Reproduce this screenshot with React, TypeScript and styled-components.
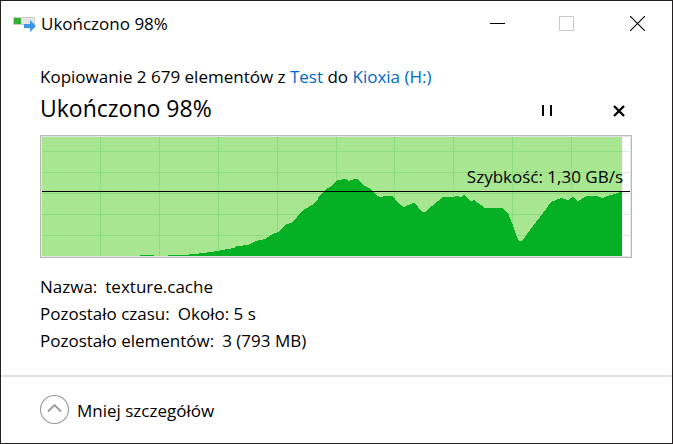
import React from "react";
import styled, { createGlobalStyle } from "styled-components";

const GlobalStyle = createGlobalStyle`
  *, *::before, *::after { box-sizing: border-box; }
  body { margin: 0; background: #fff; }
  button { font: inherit; color: inherit; border: 0; background: none; padding: 0; }
`;

const Window = styled.main`
  display: flex;
  flex-direction: column;
  min-height: 100vh;
  border: 1px solid #231f20;
  background: #fff;
  color: #000;
  font-family: "Open Sans", "Noto Sans", sans-serif;
  font-size: 17px;
  line-height: 27px;
`;

const TitleBar = styled.header`
  display: flex;
  align-items: center;
  height: 44px;
  padding-left: 12px;
`;

const Title = styled.h1`
  flex: 1;
  margin: 0 0 0 5px;
  font-size: 17px;
  font-weight: 400;
  white-space: nowrap;
`;

const CaptionButton = styled.button<{ $muted?: boolean }>`
  display: grid;
  place-items: center;
  width: 70px;
  height: 44px;
  color: ${(p) => (p.$muted ? "#c8c8c8" : "#000")};
`;

const Body = styled.section`
  flex: 1;
  padding: 18px 40px 0 39px;
`;

const Summary = styled.p`
  margin: 0;
  white-space: nowrap;
`;

const Location = styled.a`
  color: #0066cc;
  text-decoration: none;
`;

const StatusRow = styled.div`
  display: flex;
  align-items: flex-end;
  height: 37px;
`;

const Status = styled.h2`
  flex: 1;
  align-self: flex-start;
  margin: 0;
  font-size: 23px;
  line-height: 36px;
  font-weight: 400;
`;

const ActionButton = styled.button`
  display: grid;
  place-items: center;
  width: 26px;
  height: 32px;
  margin-left: 46px;
`;

const Chart = styled.figure`
  position: relative;
  margin: 8px 0 0;
  border: 1px solid #b9b9b9;
  outline: 1px solid #e4e4e8;
  outline-offset: -2px;
  padding: 1px;
`;

const Plot = styled.svg`
  display: block;
  width: 100%;
  height: 119px;
`;

const Speed = styled.figcaption`
  position: absolute;
  right: 8px;
  top: 27px;
`;

const Details = styled.dl`
  margin: 15px 0 0;
`;

const Detail = styled.div`
  display: flex;
  gap: 8px;
  dt, dd { margin: 0; }
`;

const Footer = styled.footer`
  display: flex;
  align-items: center;
  height: 68px;
  padding-left: 39px;
  border-top: 2px solid #e1e1e1;
`;

const ToggleButton = styled.button`
  display: flex;
  align-items: center;
  gap: 7px;
`;

const verticals = [58, 117, 176, 235, 294, 352, 411, 470, 529];
const horizontals = [14, 35, 56, 77, 98];

const samples =
  "126,119 126,118 141,118 152,117 161,116 168,115 175,114 180,113 186,112 192,111 195,109 206,108 214,104 223,102 229,98 238,94 243,88 251,85 260,74 270,68 275,64 277,59 283,53 288,50 295,43 304,42 307,44 312,42 315,42 323,49 327,51 331,55 335,59 339,60 343,59 351,59 356,66 362,70 371,66 373,66 380,75 383,75 390,69 401,60 411,60 415,59 419,60 422,58 429,64 432,63 443,71 460,71 466,76 470,86 475,100 477,104 480,104 488,93 501,76 509,65 519,61 526,63 531,60 536,64 545,59 554,59 561,61 565,59 573,57 578,55 580,55 580,119";

function SpeedPlot() {
  return (
    <Plot viewBox="0 0 588 119" preserveAspectRatio="none" shapeRendering="crispEdges" role="img" aria-label="Szybkość kopiowania">
      <g fill="#d2f0d7">
        {horizontals.map((y) => <rect key={y} x="0" y={y} width="587" height="1" />)}
      </g>
      <rect width="580" height="119" fill="#a8e691" />
      <g fill="#8cde7d">
        {verticals.map((x) => <rect key={x} x={x} y="0" width="1" height="119" />)}
        {horizontals.map((y) => <rect key={y} x="0" y={y} width="580" height="1" />)}
      </g>
      <path d="M98 118h14v1h-14z" fill="#06b025" />
      <polygon points={samples} fill="#06b025" />
      <rect y="54" width="588" height="1" fill="#000" />
    </Plot>
  );
}

function CopyIcon() {
  return (
    <svg width="23" height="18" viewBox="0 0 23 18" aria-hidden="true">
      <path d="M.5 3.5h21v7H.5z" fill="#e6e6e6" stroke="#cacaca" />
      <path d="M1 4h7v6H1z" fill="#33b033" />
      <path d="M11 10h6V6l6 6-6 6v-4h-6z" fill="#3a96e6" />
    </svg>
  );
}

export default function App() {
  return (
    <>
      <GlobalStyle />
      <Window>
        <TitleBar>
          <CopyIcon />
          <Title>Ukończono 98%</Title>
          <CaptionButton type="button" aria-label="Minimalizuj">
            <svg width="15" height="15" viewBox="0 0 15 15"><path d="M0 7h15v1H0z" fill="currentColor" /></svg>
          </CaptionButton>
          <CaptionButton type="button" aria-label="Maksymalizuj" disabled $muted>
            <svg width="16" height="15" viewBox="0 0 16 15"><path d="M.5.5h14v14H.5z" fill="none" stroke="currentColor" /></svg>
          </CaptionButton>
          <CaptionButton type="button" aria-label="Zamknij">
            <svg width="15" height="15" viewBox="0 0 15 15"><path d="M0 0l15 15M15 0L0 15" fill="none" stroke="currentColor" strokeWidth="1.1" /></svg>
          </CaptionButton>
        </TitleBar>
        <Body>
          <Summary>
            Kopiowanie 2 679 elementów z <Location href="#test">Test</Location> do <Location href="#kioxia">Kioxia (H:)</Location>
          </Summary>
          <StatusRow>
            <Status>Ukończono 98%</Status>
            <ActionButton type="button" aria-label="Wstrzymaj">
              <svg width="10" height="12" viewBox="0 0 10 12"><path d="M0 0h2v11H0zM8 0h2v11H8z" /></svg>
            </ActionButton>
            <ActionButton type="button" aria-label="Anuluj">
              <svg width="12" height="12" viewBox="0 0 12 12"><path d="M1 1l10 10M11 1L1 11" fill="none" stroke="#000" strokeWidth="2.4" /></svg>
            </ActionButton>
          </StatusRow>
          <Chart>
            <SpeedPlot />
            <Speed>Szybkość: 1,30 GB/s</Speed>
          </Chart>
          <Details>
            <Detail><dt>Nazwa:</dt><dd>texture.cache</dd></Detail>
            <Detail><dt>Pozostało czasu:</dt><dd>Około: 5 s</dd></Detail>
            <Detail><dt>Pozostało elementów:</dt><dd>3 (793 MB)</dd></Detail>
          </Details>
        </Body>
        <Footer>
          <ToggleButton type="button" aria-expanded="true">
            <svg width="30" height="30" viewBox="0 0 30 30" fill="none" aria-hidden="true">
              <circle cx="14.5" cy="14.5" r="14" stroke="#999" strokeWidth="1.1" />
              <path d="M8 16.5l6.5-6.5 6.5 6.5" stroke="#999" strokeWidth="1.8" />
            </svg>
            Mniej szczegółów
          </ToggleButton>
        </Footer>
      </Window>
    </>
  );
}
